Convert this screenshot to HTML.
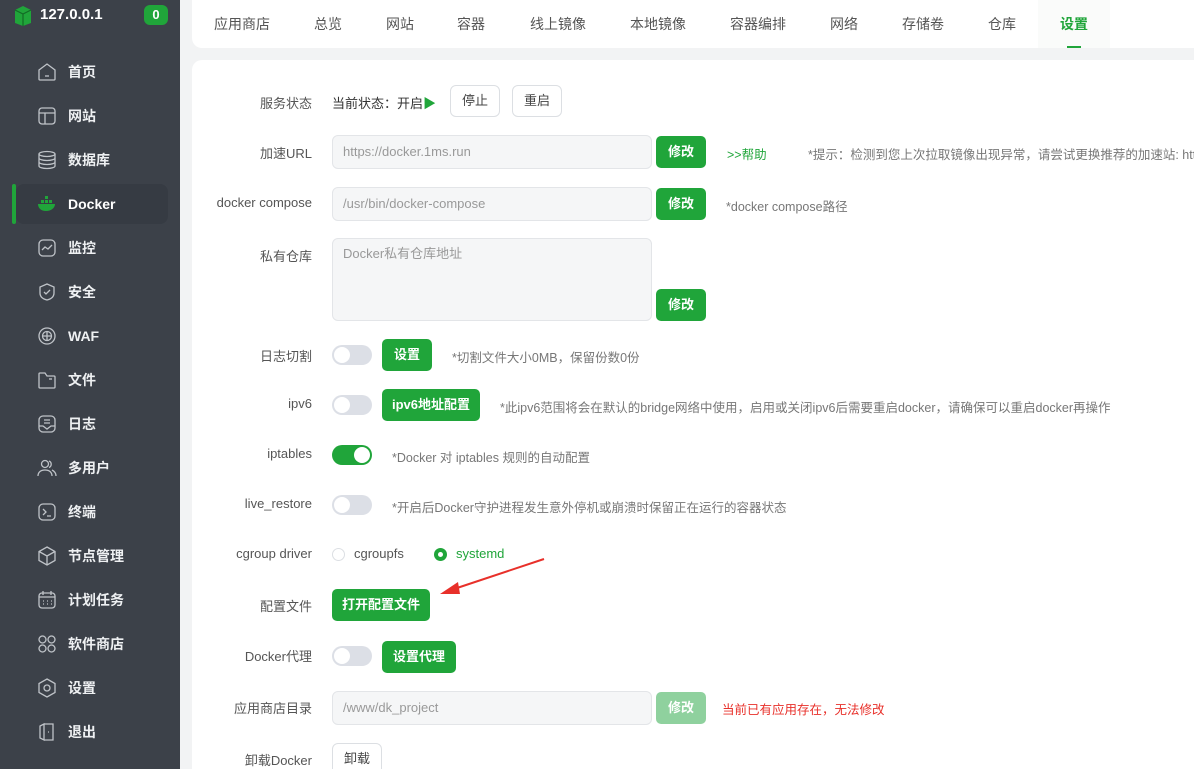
<!DOCTYPE html>
<html style="overflow:hidden;height:769px"><head><meta charset="utf-8"><style>
*{box-sizing:border-box;margin:0;padding:0}
html,body{overflow:hidden}
body{width:1194px;height:769px;background:#f2f3f4;font-family:"Liberation Sans","Noto Sans CJK SC",sans-serif;font-size:13px;color:#333;position:relative}
.side{position:absolute;left:0;top:0;width:180px;height:769px;background:#3c4149}
.a{position:absolute}
.nav{position:absolute;left:26px;font-size:14px;font-weight:bold;color:#eef0f2;height:20px;line-height:20px}
.nav svg{position:absolute;left:11px;top:0}
.nav span{position:absolute;left:42px;white-space:nowrap}
.top{position:absolute;left:192px;top:0;width:1010px;height:48px;background:#fff;border-radius:0 0 0 10px}
.top span{position:absolute;top:14px;font-size:14px;color:#555}
.card{position:absolute;left:192px;top:60px;width:1010px;height:709px;background:#fff;border-radius:10px 0 0 0}
.lbl{position:absolute;right:882px;font-size:13px;color:#555;white-space:nowrap}
.inp{position:absolute;left:332px;width:320px;height:34px;background:#f5f6f7;border:1px solid #e3e5e8;border-radius:6px;color:#999;padding:0 10px;line-height:32px;font-size:13px}
.gb{position:absolute;height:32px;background:#20a53a;color:#fff;border-radius:5px;font-weight:bold;font-size:13px;line-height:32px;text-align:center}
.wb{position:absolute;height:32px;border:1px solid #dcdfe3;background:#fff;border-radius:6px;color:#444;line-height:30px;text-align:center;font-size:13px}
.tip{position:absolute;color:#777;font-size:12.5px;white-space:nowrap}
.sw{position:absolute;left:332px;width:40px;height:20px;border-radius:10px;background:#dcdfe6}
.sw:after{content:"";position:absolute;left:2px;top:2px;width:16px;height:16px;border-radius:50%;background:#fff}
.sw.on{background:#20a53a}.sw.on:after{left:22px}
</style></head><body>
<div class="side">
 <svg class="a" style="left:14px;top:5px" width="18" height="22" viewBox="0 0 18 22"><path d="M9 1L17 5V18L9 21L1 18V5Z" fill="#20a53a"/><path d="M1 5L9 9L17 5M9 9V21" stroke="#136b25" stroke-width="1.2" fill="none"/></svg>
 <div class="a" style="left:40px;top:6px;font-size:15px;font-weight:bold;color:#fff">127.0.0.1</div>
 <div class="a" style="left:144px;top:5px;width:24px;height:20px;border-radius:6px;background:#20a53a;color:#fff;font-weight:bold;text-align:center;line-height:20px;font-size:13px">0</div>
 <div class="a" style="left:16px;top:184px;width:152px;height:40px;background:#363b43;border-radius:8px"></div>
 <div class="a" style="left:12px;top:184px;width:4px;height:40px;background:#20a53a;border-radius:2px"></div>
 <div class="nav" style="top:62px"><svg width="20" height="20" viewBox="0 0 20 20" fill="none" stroke="#bfc3c8" stroke-width="1.3"><path d="M2 8L10 2L18 8V17a1 1 0 0 1-1 1H3a1 1 0 0 1-1-1Z"/><path d="M8 14h4"/></svg><span>首页</span></div>
 <div class="nav" style="top:106px"><svg width="20" height="20" viewBox="0 0 20 20" fill="none" stroke="#bfc3c8" stroke-width="1.3"><rect x="2" y="2" width="16" height="16" rx="3"/><path d="M2 7h16M8 7v11"/></svg><span>网站</span></div>
 <div class="nav" style="top:150px"><svg width="20" height="20" viewBox="0 0 20 20" fill="none" stroke="#bfc3c8" stroke-width="1.3"><ellipse cx="10" cy="4" rx="8" ry="2.5"/><path d="M2 4v12c0 1.4 3.6 2.5 8 2.5s8-1.1 8-2.5V4M2 8c0 1.4 3.6 2.5 8 2.5s8-1.1 8-2.5M2 12c0 1.4 3.6 2.5 8 2.5s8-1.1 8-2.5"/></svg><span>数据库</span></div>
 <div class="nav" style="top:194px;color:#fff"><svg width="20" height="20" viewBox="0 0 20 20"><path d="M1 10h17c0 4-4 7-9 7S1 14 1 10Z" fill="#20a53a"/><rect x="4" y="6" width="3" height="3" fill="#20a53a"/><rect x="8" y="6" width="3" height="3" fill="#20a53a"/><rect x="8" y="2" width="3" height="3" fill="#20a53a"/><rect x="12" y="6" width="3" height="3" fill="#20a53a"/></svg><span>Docker</span></div>
 <div class="nav" style="top:238px"><svg width="20" height="20" viewBox="0 0 20 20" fill="none" stroke="#bfc3c8" stroke-width="1.3"><rect x="2" y="2" width="16" height="16" rx="4"/><path d="M5 12l3-3 3 2 4-4"/></svg><span>监控</span></div>
 <div class="nav" style="top:282px"><svg width="20" height="20" viewBox="0 0 20 20" fill="none" stroke="#bfc3c8" stroke-width="1.3"><path d="M10 2l7 3v6c0 4-3 6-7 7-4-1-7-3-7-7V5Z"/><path d="M7 10l2 2 4-4"/></svg><span>安全</span></div>
 <div class="nav" style="top:326px"><svg width="20" height="20" viewBox="0 0 20 20" fill="none" stroke="#bfc3c8" stroke-width="1.3"><circle cx="10" cy="10" r="8"/><circle cx="10" cy="10" r="4.5"/><path d="M5.5 10h9M10 5.5v9"/></svg><span>WAF</span></div>
 <div class="nav" style="top:370px"><svg width="20" height="20" viewBox="0 0 20 20" fill="none" stroke="#bfc3c8" stroke-width="1.3"><path d="M2 4a1 1 0 0 1 1-1h5l2 3h7a1 1 0 0 1 1 1v10a1 1 0 0 1-1 1H3a1 1 0 0 1-1-1Z"/><path d="M12 9h3"/></svg><span>文件</span></div>
 <div class="nav" style="top:414px"><svg width="20" height="20" viewBox="0 0 20 20" fill="none" stroke="#bfc3c8" stroke-width="1.3"><rect x="2" y="2" width="16" height="16" rx="4"/><path d="M7 6h6M7 9h6M2 12h4l4 3 4-3h4"/></svg><span>日志</span></div>
 <div class="nav" style="top:458px"><svg width="20" height="20" viewBox="0 0 20 20" fill="none" stroke="#bfc3c8" stroke-width="1.3"><circle cx="8" cy="6" r="3.5"/><path d="M1 18c0-4 3-6 7-6s7 2 7 6M12 3a3.5 3.5 0 0 1 0 6.5M15 12c2 1 4 3 4 6"/></svg><span>多用户</span></div>
 <div class="nav" style="top:502px"><svg width="20" height="20" viewBox="0 0 20 20" fill="none" stroke="#bfc3c8" stroke-width="1.3"><rect x="2" y="2" width="16" height="16" rx="4"/><path d="M6 7l3 3-3 3M10 14h4"/></svg><span>终端</span></div>
 <div class="nav" style="top:546px"><svg width="20" height="20" viewBox="0 0 20 20" fill="none" stroke="#bfc3c8" stroke-width="1.3"><path d="M10 1l8 4.5v9L10 19l-8-4.5v-9Z"/><path d="M2 5.5L10 10l8-4.5M10 10v9"/></svg><span>节点管理</span></div>
 <div class="nav" style="top:590px"><svg width="20" height="20" viewBox="0 0 20 20" fill="none" stroke="#bfc3c8" stroke-width="1.3"><rect x="2" y="3" width="16" height="15" rx="3"/><path d="M2 7h16M6 1v4M14 1v4M6 11h1M10 11h1M14 11h1M6 14h1M10 14h1M14 14h1"/></svg><span>计划任务</span></div>
 <div class="nav" style="top:634px"><svg width="20" height="20" viewBox="0 0 20 20" fill="none" stroke="#bfc3c8" stroke-width="1.3"><circle cx="5.5" cy="5.5" r="3.5"/><circle cx="14.5" cy="5.5" r="3.5"/><circle cx="5.5" cy="14.5" r="3.5"/><circle cx="14.5" cy="14.5" r="3.5"/></svg><span>软件商店</span></div>
 <div class="nav" style="top:678px"><svg width="20" height="20" viewBox="0 0 20 20" fill="none" stroke="#bfc3c8" stroke-width="1.3"><path d="M10 1l8 4.5v9L10 19l-8-4.5v-9Z"/><circle cx="10" cy="10" r="3"/></svg><span>设置</span></div>
 <div class="nav" style="top:722px"><svg width="20" height="20" viewBox="0 0 20 20" fill="none" stroke="#bfc3c8" stroke-width="1.3"><path d="M7 2h9v16H7M7 2L3 4v12l4 2Z"/><path d="M11 10h1"/></svg><span>退出</span></div>
</div>
<div class="top">
 <span style="left:22px">应用商店</span><span style="left:122px">总览</span><span style="left:194px">网站</span><span style="left:265px">容器</span><span style="left:338px">线上镜像</span><span style="left:438px">本地镜像</span><span style="left:538px">容器编排</span><span style="left:638px">网络</span><span style="left:710px">存储卷</span><span style="left:796px">仓库</span>
 <div class="a" style="left:846px;top:0;width:72px;height:48px;background:#fafbfa"></div>
 <span style="left:868px;color:#20a53a;font-weight:bold">设置</span>
 <div class="a" style="left:875px;top:46px;width:14px;height:2px;background:#20a53a"></div>
</div>
<div class="card"></div>
<div class="lbl" style="top:93px">服务状态</div>
<div class="a" style="left:332px;top:93px;font-size:13px;color:#333">当前状态：开启<span style="color:#20a53a">▶</span></div>
<div class="wb" style="left:450px;top:85px;width:50px">停止</div>
<div class="wb" style="left:512px;top:85px;width:50px">重启</div>

<div class="lbl" style="top:143px">加速URL</div>
<div class="inp" style="top:135px">https://docker.1ms.run</div>
<div class="gb" style="left:656px;top:136px;width:50px">修改</div>
<div class="a" style="left:727px;top:144px;color:#20a53a;font-size:12.5px">&gt;&gt;帮助</div>
<div class="tip" style="left:808px;top:144px">*提示：检测到您上次拉取镜像出现异常，请尝试更换推荐的加速站: https://</div>

<div class="lbl" style="top:195px">docker compose</div>
<div class="inp" style="top:187px">/usr/bin/docker-compose</div>
<div class="gb" style="left:656px;top:188px;width:50px">修改</div>
<div class="tip" style="left:726px;top:196px">*docker compose路径</div>

<div class="lbl" style="top:246px">私有仓库</div>
<div class="inp" style="top:238px;height:83px;line-height:30px">Docker私有仓库地址</div>
<div class="gb" style="left:656px;top:289px;width:50px">修改</div>

<div class="lbl" style="top:346px">日志切割</div>
<div class="sw" style="top:345px"></div>
<div class="gb" style="left:382px;top:339px;width:50px">设置</div>
<div class="tip" style="left:452px;top:347px">*切割文件大小0MB，保留份数0份</div>

<div class="lbl" style="top:396px">ipv6</div>
<div class="sw" style="top:395px"></div>
<div class="gb" style="left:382px;top:389px;width:98px">ipv6地址配置</div>
<div class="tip" style="left:500px;top:397px">*此ipv6范围将会在默认的bridge网络中使用，启用或关闭ipv6后需要重启docker，请确保可以重启docker再操作</div>

<div class="lbl" style="top:446px">iptables</div>
<div class="sw on" style="top:445px"></div>
<div class="tip" style="left:392px;top:447px">*Docker 对 iptables 规则的自动配置</div>

<div class="lbl" style="top:496px">live_restore</div>
<div class="sw" style="top:495px"></div>
<div class="tip" style="left:392px;top:497px">*开启后Docker守护进程发生意外停机或崩溃时保留正在运行的容器状态</div>

<div class="lbl" style="top:546px">cgroup driver</div>
<div class="a" style="left:332px;top:548px;width:13px;height:13px;border:1px solid #dcdfe3;border-radius:50%"></div>
<div class="a" style="left:354px;top:546px;color:#555">cgroupfs</div>
<div class="a" style="left:434px;top:548px;width:13px;height:13px;border-radius:50%;background:#20a53a"><div class="a" style="left:4px;top:4px;width:5px;height:5px;border-radius:50%;background:#fff"></div></div>
<div class="a" style="left:456px;top:546px;color:#20a53a">systemd</div>

<div class="lbl" style="top:596px">配置文件</div>
<div class="gb" style="left:332px;top:589px;width:98px">打开配置文件</div>
<svg class="a" style="left:436px;top:556px" width="112" height="42" viewBox="0 0 112 42"><path d="M108 3L18 33" stroke="#e8302a" stroke-width="2"/><path d="M4 38L22 26L24 38Z" fill="#e8302a"/></svg>

<div class="lbl" style="top:646px">Docker代理</div>
<div class="sw" style="top:646px"></div>
<div class="gb" style="left:382px;top:641px;width:74px">设置代理</div>

<div class="lbl" style="top:698px">应用商店目录</div>
<div class="inp" style="top:691px">/www/dk_project</div>
<div class="gb" style="left:656px;top:692px;width:50px;background:#8fd19e">修改</div>
<div class="a" style="left:722px;top:699px;color:#e8302a;font-size:12.5px">当前已有应用存在，无法修改</div>

<div class="lbl" style="top:750px">卸载Docker</div>
<div class="wb" style="left:332px;top:743px;width:50px">卸载</div>
</body></html>
